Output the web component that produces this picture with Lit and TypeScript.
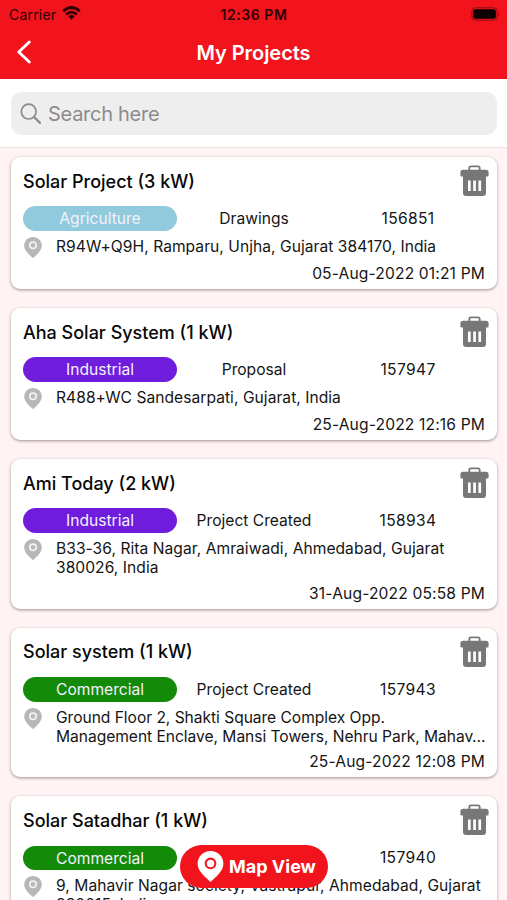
import { LitElement, html, css, svg } from "lit";
import { customElement, property } from "lit/decorators.js";
import { classMap } from "lit/directives/class-map.js";

interface Project {
  name: string;
  type: "Agriculture" | "Industrial" | "Commercial";
  stage: string;
  id: string;
  address: string;
  date: string;
}

const projects: Project[] = [
  {
    name: "Solar Project (3 kW)",
    type: "Agriculture",
    stage: "Drawings",
    id: "156851",
    address: "R94W+Q9H, Ramparu, Unjha, Gujarat 384170, India",
    date: "05-Aug-2022 01:21 PM",
  },
  {
    name: "Aha Solar System (1 kW)",
    type: "Industrial",
    stage: "Proposal",
    id: "157947",
    address: "R488+WC Sandesarpati, Gujarat, India",
    date: "25-Aug-2022 12:16 PM",
  },
  {
    name: "Ami Today (2 kW)",
    type: "Industrial",
    stage: "Project Created",
    id: "158934",
    address: "B33-36, Rita Nagar, Amraiwadi, Ahmedabad, Gujarat 380026, India",
    date: "31-Aug-2022 05:58 PM",
  },
  {
    name: "Solar system (1 kW)",
    type: "Commercial",
    stage: "Project Created",
    id: "157943",
    address:
      "Ground Floor 2, Shakti Square Complex Opp.\nManagement Enclave, Mansi Towers, Nehru Park, Mahav…",
    date: "25-Aug-2022 12:08 PM",
  },
  {
    name: "Solar Satadhar (1 kW)",
    type: "Commercial",
    stage: "",
    id: "157940",
    address: "9, Mahavir Nagar society, Vastrapur, Ahmedabad, Gujarat 380015, India",
    date: "",
  },
];

const pinShape = svg`<path fill="currentColor" fill-rule="evenodd"
  d="M9 0C4 0 .2 3.8.2 8.6c0 3.4 2 6 4.6 8.6L9 21.2l4.2-4C15.800 14.600 17.800 12 17.800 8.600 17.800 3.800 14 0 9 0Z"/>`;

@customElement("project-card")
export class ProjectCard extends LitElement {
  @property({ attribute: false }) project!: Project;

  static styles = css`
    :host {
      display: block;
      box-sizing: border-box;
      padding: 8px 12px 7px;
      background: #fff;
      border-radius: 9px;
      box-shadow: 0 1px 3px rgba(70, 40, 45, 0.5);
      font-size: 15.6px;
      line-height: 19px;
      color: #151515;
    }
    .head {
      display: flex;
      align-items: center;
      justify-content: space-between;
      height: 31px;
      margin-right: -4px;
    }
    .name {
      padding-top: 1px;
      font-size: 18px;
      font-weight: 500;
      color: #080808;
    }
    .trash {
      width: 29px;
      height: 31px;
      color: #777;
    }
    .facts {
      display: grid;
      grid-template-columns: repeat(3, 1fr);
      align-items: center;
      height: 24.5px;
      margin-top: 10.3px;
      text-align: center;
    }
    .type {
      height: 24.5px;
      line-height: 25px;
      border-radius: 13px;
      color: #f4f1ff;
    }
    .id {
      letter-spacing: 0.35px;
    }
    .Agriculture {
      background: #90cadc;
    }
    .Industrial {
      background: #6f1cdc;
    }
    .Commercial {
      background: #138a08;
    }
    .place {
      display: flex;
      min-height: 20.4px;
      margin-top: 6.2px;
    }
    .pin {
      flex: none;
      width: 18px;
      height: 21px;
      margin: 0 14px -2px 1px;
      color: #b7b7b7;
    }
    .address {
      align-self: flex-start;
      margin-right: -2px;
      letter-spacing: 0.04px;
      white-space: pre-line;
    }
    .clipped {
      margin-right: -6px;
      letter-spacing: -0.04px;
    }
    .date {
      height: 19px;
      margin-top: 6.4px;
      margin-bottom: -0.6px;
      text-align: right;
      letter-spacing: 0.15px;
    }
  `;

  render() {
    const p = this.project;
    return html`
      <div class="head">
        <span class="name">${p.name}</span>
        <svg class="trash" viewBox="0 0 29 31">
          <path
            fill="none"
            stroke="currentColor"
            stroke-width="1.800"
            d="M9.300 5.500V3q0-1.700 1.700-1.700h7q1.700 0 1.700 1.700v2.500"
          />
          <path
            fill="currentColor"
            fill-rule="evenodd"
            d="M3 4.800H26Q28.600 4.800 28.600 7.500V10.500Q28.600 11.400 27.500 11.400H26V28Q26 31 23 31H6Q3 31 3 28V11.400H1.500Q.4 11.400.4 10.500V7.500Q.4 4.800 3 4.800ZM8 15.500V26H10.700V15.500ZM13.200 15.500V26H15.900V15.500ZM18.400 15.500V26H21.100V15.500Z"
          />
        </svg>
      </div>
      <div class="facts">
        <span class="type ${p.type}">${p.type}</span>
        <span>${p.stage}</span>
        <span class="id">${p.id}</span>
      </div>
      <div class="place">
        <svg class="pin" viewBox="0 0 18 21">
          ${pinShape}
          <circle cx="9" cy="8.300" r="3.200" fill="none" stroke="#f2f2f2" stroke-width="1.700" />
        </svg>
        <div class=${classMap({ address: true, clipped: p.address.endsWith("…") })}>${p.address}</div>
      </div>
      <div class="date">${p.date}</div>
    `;
  }
}

@customElement("app-root")
export class AppRoot extends LitElement {
  static styles = css`
    :host {
      display: flex;
      flex-direction: column;
      position: relative;
      box-sizing: border-box;
      height: 900px;
      overflow: hidden;
      background: #fff3f4;
      font-family: Inter, "Liberation Sans", sans-serif;
    }
    .top {
      flex: none;
      height: 79px;
      background: #f1141c;
    }
    .status {
      display: grid;
      grid-template-columns: 1fr auto 1fr;
      align-items: center;
      height: 28px;
      padding: 0 6px 0 7px;
      font-size: 14px;
      color: #2e0204;
    }
    .carrier {
      display: flex;
      align-items: center;
      gap: 6px;
      padding-left: 2px;
      letter-spacing: 0.2px;
    }
    .wifi {
      width: 19px;
      height: 14px;
      margin-top: -2px;
    }
    .time {
      font-weight: 600;
      letter-spacing: 0.55px;
    }
    .battery {
      justify-self: end;
      width: 30px;
      height: 14px;
      margin-top: -1px;
    }
    .nav {
      display: grid;
      grid-template-columns: 1fr auto 1fr;
      align-items: center;
      height: 48px;
      padding: 0 16px;
      color: #fff;
    }
    .back {
      width: 16px;
      height: 24px;
    }
    .title {
      padding-top: 1px;
      font-size: 20px;
      font-weight: 600;
      letter-spacing: -0.05px;
    }
    .finder {
      flex: none;
      box-sizing: border-box;
      height: 69px;
      padding: 13px 10px 0 11px;
      background: #fff;
      border-bottom: 1px solid #efe1e2;
    }
    .field {
      display: flex;
      align-items: center;
      gap: 7px;
      height: 43px;
      padding-left: 9px;
      border-radius: 11px;
      background: #eee;
      font-size: 20px;
      letter-spacing: -0.28px;
      color: #8b8b8d;
    }
    .hint {
      padding-top: 1px;
    }
    .lens {
      width: 21px;
      height: 21px;
    }
    .list {
      display: flex;
      flex-direction: column;
      gap: 18.800px;
      padding: 9.200px 10px 0 11px;
    }
    .map {
      position: absolute;
      left: 180px;
      top: 845px;
      display: flex;
      align-items: center;
      box-sizing: border-box;
      width: 148px;
      height: 43px;
      padding-left: 17px;
      gap: 5px;
      border-radius: 22px;
      background: #f1141c;
      color: #fff;
      font-size: 18px;
      font-weight: 700;
      white-space: nowrap;
    }
    .map-pin {
      flex: none;
      width: 27px;
      height: 31px;
    }
  `;

  render() {
    return html`
      <header class="top">
        <div class="status">
          <span class="carrier">
            Carrier
            <svg class="wifi" viewBox="0 0 19 14" fill="none" stroke="#2e0204" stroke-width="2.700">
              <path d="M1.200 5.200Q9.500-2.200 17.800 5.200" />
              <path d="M4.200 8.500Q9.500 3.900 14.800 8.500" />
              <path fill="#2e0204" stroke="none" d="M6.300 10.200Q9.500 7.800 12.700 10.200L9.500 13.700Z" />
            </svg>
          </span>
          <span class="time">12:36 PM</span>
          <svg class="battery" viewBox="0 0 30 14">
            <rect x=".8" y=".8" width="25.500" height="12.400" rx="3.800" fill="none" stroke="#8e0b11" />
            <rect x="2.200" y="2.300" width="22.700" height="9.400" rx="2.300" fill="#0c0000" />
            <path d="M27.700 5q2 2 0 4Z" fill="#8e0b11" />
          </svg>
        </div>
        <nav class="nav">
          <svg class="back" viewBox="0 0 16 24">
            <path
              d="M13.300 2 2.800 12 13.300 22"
              fill="none"
              stroke="#fff"
              stroke-width="2.900"
              stroke-linecap="round"
              stroke-linejoin="round"
            />
          </svg>
          <span class="title">My Projects</span>
        </nav>
      </header>
      <div class="finder">
        <div class="field">
          <svg class="lens" viewBox="0 0 21 21" fill="none" stroke="#8b8b8d">
            <circle cx="8.700" cy="8.600" r="7.400" stroke-width="1.700" />
            <path d="M14 14l6 5.800" stroke-width="2.300" stroke-linecap="round" />
          </svg>
          <span class="hint">Search here</span>
        </div>
      </div>
      <main class="list">
        ${projects.map((p) => html`<project-card .project=${p}></project-card>`)}
      </main>
      <div class="map">
        <svg class="map-pin" viewBox="0 0 18 21.200">
          ${pinShape}
          <circle cx="9" cy="8.500" r="3.300" fill="none" stroke="#f1141c" stroke-width="1.400" />
        </svg>
        <span>Map View</span>
      </div>
    `;
  }
}
